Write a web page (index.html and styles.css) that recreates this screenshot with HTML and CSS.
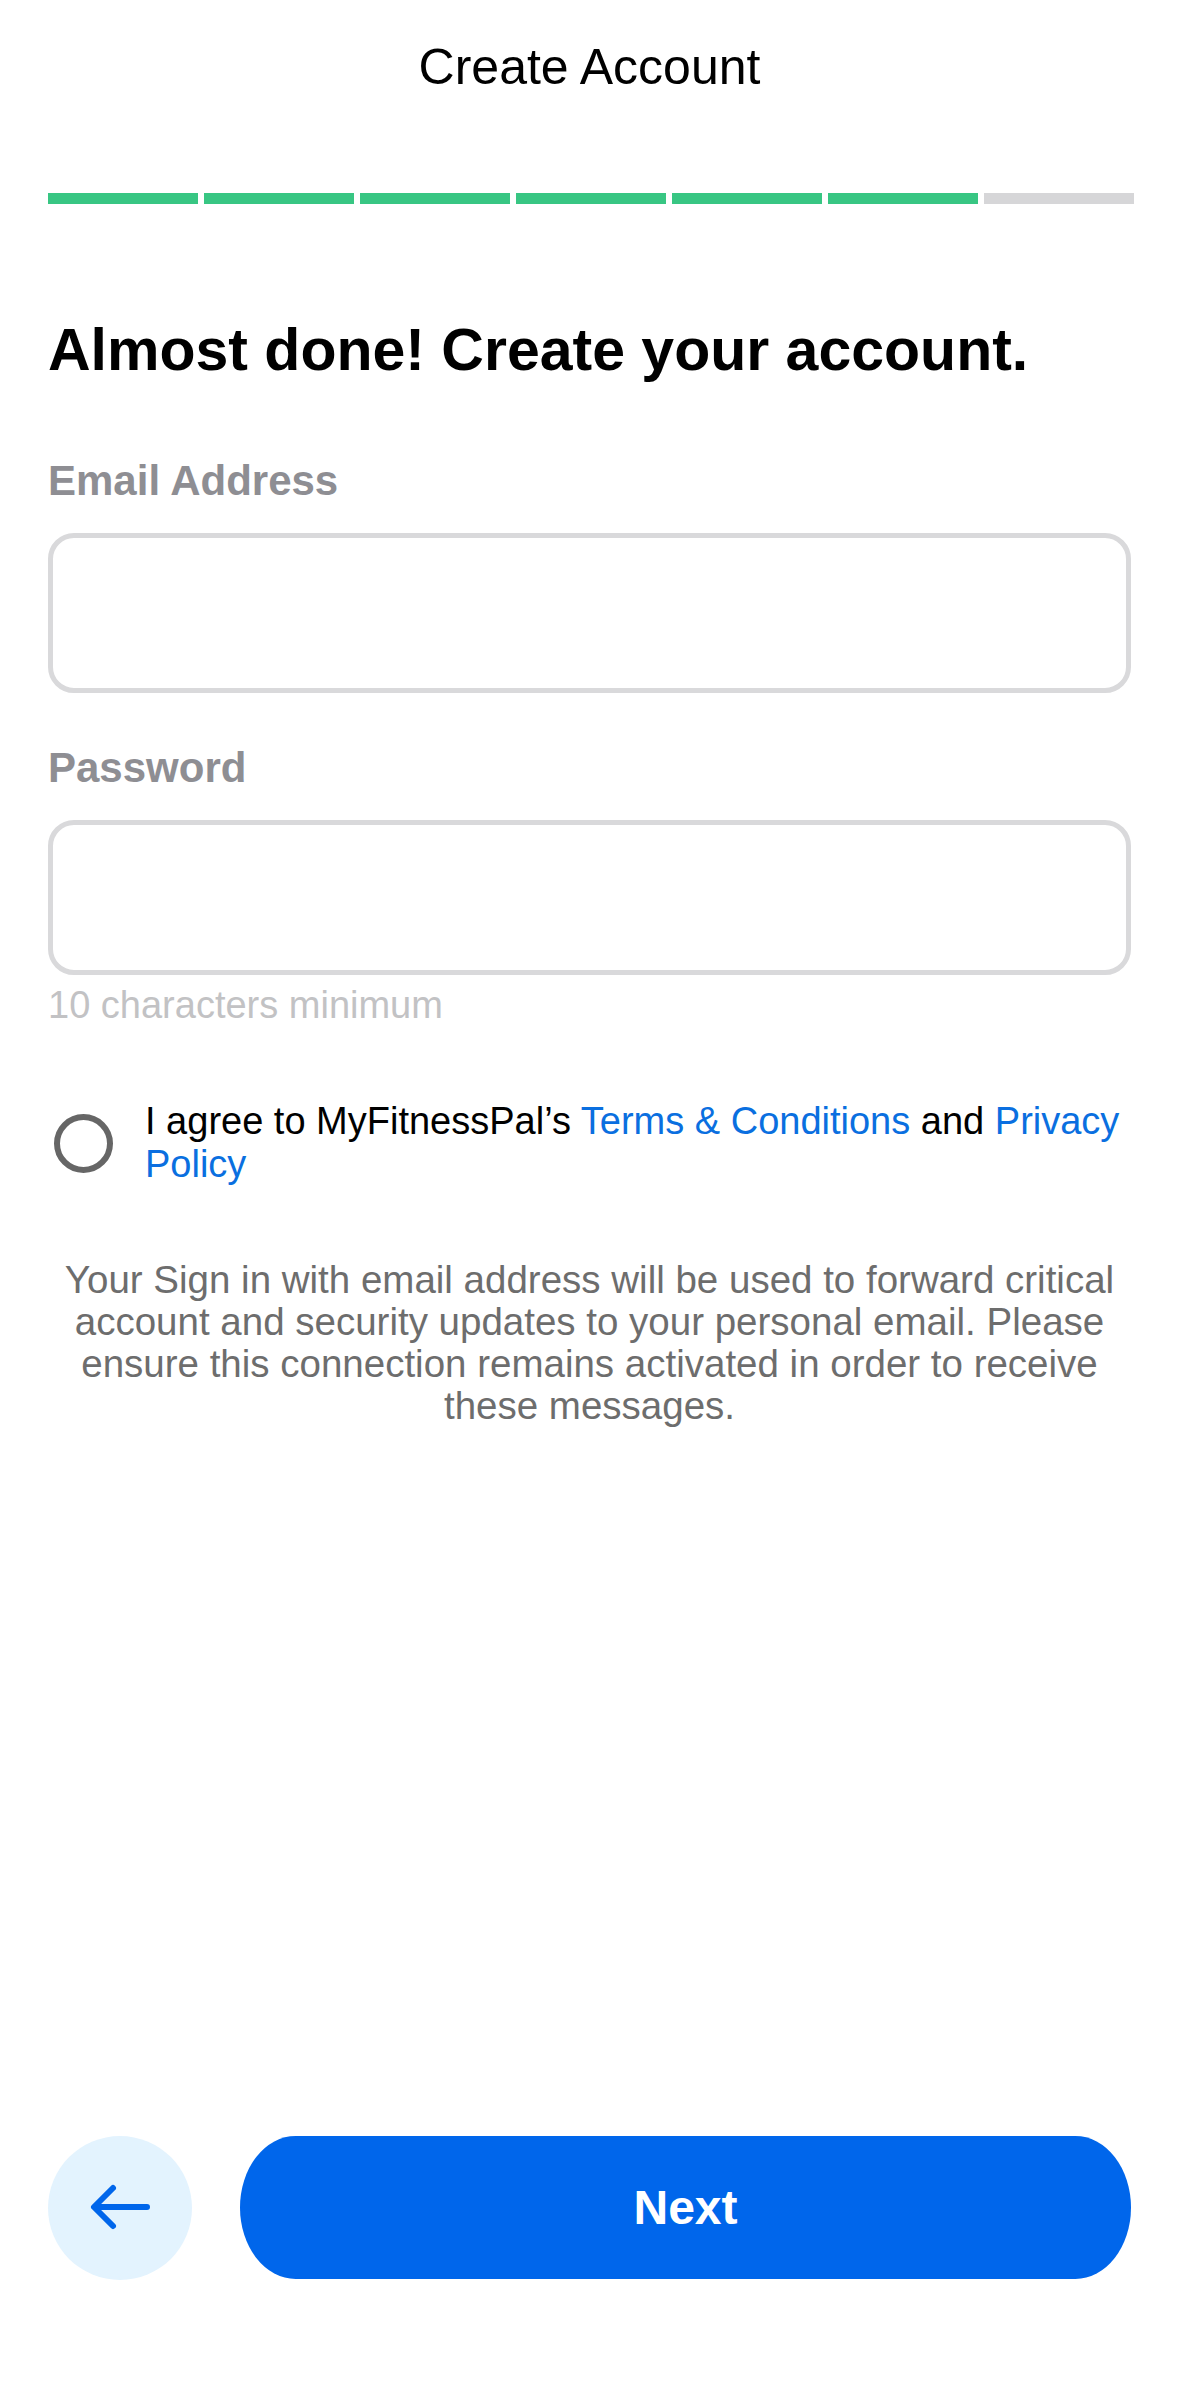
FILE: index.html
```html
<!DOCTYPE html>
<html lang="en">
<head>
  <meta charset="UTF-8" />
  <meta name="viewport" content="width=device-width, initial-scale=1.0" />
  <title>Create Account</title>
  <link rel="stylesheet" href="styles.css">
</head>
<body>
  <div class="screen">
    <div class="topbar">Create Account</div>

    <div class="progress">
      <span class="step done"></span>
      <span class="step done"></span>
      <span class="step done"></span>
      <span class="step done"></span>
      <span class="step done"></span>
      <span class="step done"></span>
      <span class="step"></span>
    </div>

    <h1>Almost done! Create your account.</h1>

    <form class="signup" onsubmit="return false">
      <label class="field-label" for="email">Email Address</label>
      <input class="field email" type="email" id="email" />

      <label class="field-label pass" for="password">Password</label>
      <input class="field" type="password" id="password" />
      <div class="hint">10 characters minimum</div>

      <label class="agree">
        <span class="radio"></span>
        <span class="agree-text">I agree to MyFitnessPal’s <a href="#">Terms &amp; Conditions</a> and <a href="#">Privacy Policy</a></span>
      </label>

      <p class="notice">Your Sign in with email address will be used to forward critical account and security updates to your personal email. Please ensure this connection remains activated in order to receive these messages.</p>
    </form>

    <div class="actions">
      <button class="back" type="button" aria-label="Back">
        <svg width="144" height="144" viewBox="0 0 144 144">
          <path d="M99 71H47M65 52L46 71L65 90" fill="none" stroke="#0066eb" stroke-width="6" stroke-linecap="round" stroke-linejoin="round"/>
        </svg>
      </button>
      <button class="next" type="submit">Next</button>
    </div>
  </div>
</body>
</html>
```

FILE: styles.css
```css
body {
  margin: 0;
  font-family: "Liberation Sans", Arial, sans-serif;
  background: #fff;
  color: #000;
}
.screen {
  display: flex;
  flex-direction: column;
  min-height: 2396px;
  padding: 0 48px 116px;
  box-sizing: border-box;
}
.topbar {
  height: 134px;
  display: flex;
  align-items: center;
  justify-content: center;
  font-size: 50px;
}
.progress {
  display: flex;
  gap: 6px;
  height: 11px;
  margin: 59px -3px 0 0;
}
.step {
  flex: 1;
  background: #d6d6d8;
}
.step.done {
  background: #38c683;
}
h1 {
  margin: 111px 0 0;
  font-size: 59px;
  line-height: 71px;
  font-weight: bold;
}
.signup {
  display: flex;
  flex-direction: column;
}
.field-label {
  margin-top: 70px;
  font-size: 42px;
  line-height: 50px;
  font-weight: bold;
  color: #8e8e93;
}
.field-label.pass {
  margin-top: 50px;
}
.field {
  margin-top: 27px;
  height: 155px;
  box-sizing: border-box;
  border: 5px solid #d9d9db;
  border-radius: 26px;
  padding: 0 30px;
  font-size: 42px;
  font-family: inherit;
  outline: none;
}
.field.email {
  height: 160px;
}
.hint {
  margin-top: 8px;
  font-size: 38px;
  line-height: 44px;
  color: #c2c2c4;
}
.agree {
  margin-top: 73px;
  display: flex;
  align-items: center;
  gap: 32px;
  font-size: 38px;
  line-height: 43px;
}
.radio {
  flex: none;
  width: 59px;
  height: 59px;
  margin-left: 6px;
  box-sizing: border-box;
  border: 6px solid #666;
  border-radius: 50%;
}
.agree-text a {
  color: #0a6fe0;
  text-decoration: none;
}
.notice {
  margin: 73px 0 0;
  padding: 0 4px;
  text-align: center;
  font-size: 38.5px;
  line-height: 42px;
  color: #6d6d6d;
}
.actions {
  margin-top: auto;
  display: flex;
  gap: 48px;
}
.back {
  flex: none;
  width: 144px;
  height: 144px;
  padding: 0;
  border: none;
  border-radius: 50%;
  background: #e3f3fe;
}
.back svg {
  display: block;
}
.next {
  flex: 1;
  height: 143px;
  border: none;
  border-radius: 56px / 72px;
  background: #0066eb;
  color: #fff;
  font-family: inherit;
  font-size: 48px;
  font-weight: bold;
}
```
